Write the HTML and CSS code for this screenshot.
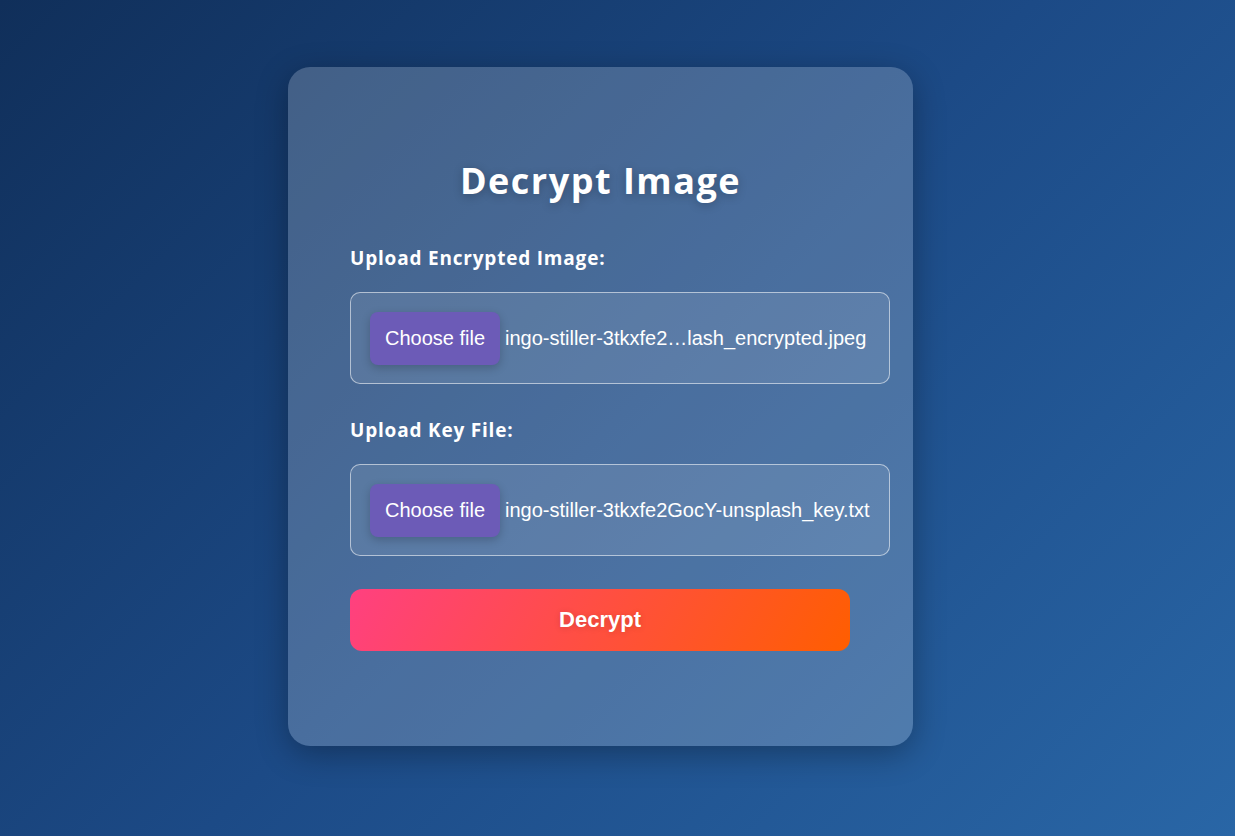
FILE: index.html
```html
<!DOCTYPE html>
<html lang="en">
<head>
<meta charset="utf-8">
<title>Decrypt Image</title>
<link rel="stylesheet" href="styles.css">
</head>
<body>
<div class="page">
  <main class="card">
    <h1 class="title">Decrypt Image</h1>
    <form class="form">
      <label class="label">Upload Encrypted Image:</label>
      <div class="file-input">
        <span class="file-btn">Choose file</span>
        <span class="file-name">ingo-stiller-3tkxfe2…lash_encrypted.jpeg</span>
      </div>
      <label class="label">Upload Key File:</label>
      <div class="file-input">
        <span class="file-btn">Choose file</span>
        <span class="file-name">ingo-stiller-3tkxfe2GocY-unsplash_key.txt</span>
      </div>
      <button type="button" class="submit">Decrypt</button>
    </form>
  </main>
</div>
</body>
</html>
```

FILE: styles.css
```css
* { box-sizing: border-box; }
html, body { margin: 0; height: 100%; }
body {
  background: linear-gradient(135deg, #102f5a 0%, #1c4a86 50%, #2966a6 100%);
  font-family: "Open Sans", "Liberation Sans", sans-serif;
  color: #fff;
  overflow: hidden;
}
.page {
  padding: 67px 0 0 288px;
}
.card {
  width: 625px;
  height: 679px;
  border-radius: 22px;
  background: rgba(255, 255, 255, 0.2);
  box-shadow: 0 8px 32px rgba(0, 0, 0, 0.3);
  padding: 92px 62px 0;
}
.title {
  margin: 0 0 43px;
  text-align: center;
  font-family: "Open Sans", sans-serif;
  font-weight: 700;
  font-size: 36px;
  line-height: 44px;
  letter-spacing: 1.5px;
  text-shadow: 0 2px 10px rgba(0, 0, 0, 0.25);
}
.form {
  display: flex;
  flex-direction: column;
  width: 500px;
}
.label {
  display: block;
  font-family: "Open Sans", sans-serif;
  font-weight: 700;
  font-size: 19px;
  line-height: 24px;
  letter-spacing: 0.8px;
  margin-bottom: 22px;
}
.file-input {
  width: 540px;
  height: 92px;
  border: 1px solid rgba(255, 255, 255, 0.55);
  border-radius: 10px;
  background: rgba(255, 255, 255, 0.1);
  padding: 0 19px;
  display: flex;
  align-items: center;
  margin-bottom: 34px;
  font-family: "Liberation Sans", Arial, sans-serif;
  font-size: 20px;
}
.file-btn {
  width: 130px;
  height: 53px;
  border-radius: 8px;
  background: #6c5bb7;
  display: flex;
  align-items: center;
  justify-content: center;
  box-shadow: 0 3px 10px rgba(0, 0, 0, 0.2);
  margin-right: 5px;
  flex: none;
}
.file-name {
  white-space: nowrap;
}
.submit {
  margin-top: -1px;
  width: 500px;
  height: 62px;
  border: none;
  border-radius: 12px;
  background: linear-gradient(120deg, #ff4080 0%, #ff5e00 100%);
  color: #fff;
  font-family: "Liberation Sans", Arial, sans-serif;
  font-weight: 700;
  font-size: 22px;
  text-shadow: 0 1px 6px rgba(0, 0, 0, 0.15);
  cursor: pointer;
}
```
